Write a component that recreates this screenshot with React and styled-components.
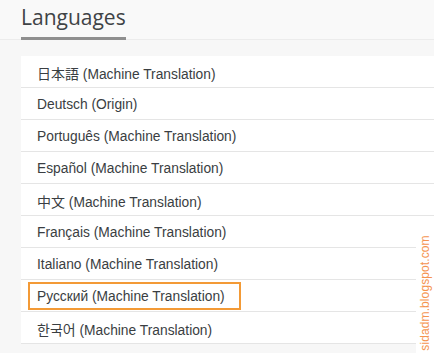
import React from "react";
import styled, { createGlobalStyle } from "styled-components";

const GlobalStyle = createGlobalStyle`
  html, body {
    margin: 0;
    padding: 0;
    background: #f7f7f7;
  }
`;

const Page = styled.div`
  position: relative;
  width: 434px;
  height: 353px;
  overflow: hidden;
  background: #f7f7f7;
  font-family: "Liberation Sans", Arial, "Noto Sans CJK JP", sans-serif;
`;

const Header = styled.div`
  height: 39px;
  padding-left: 21px;
  border-bottom: 1px solid #ececec;
  background: #f9f9f9;
  display: flex;
  align-items: flex-end;
`;

const Title = styled.div`
  font-family: "Open Sans", sans-serif;
  font-size: 21px;
  color: #3f4346;
  line-height: 1;
  padding-bottom: 9px;
  border-bottom: 3px solid #8f8f8f;
  margin-bottom: -1px;
  width: 105px;
`;

const List = styled.div`
  margin: 16px 0 0 21px;
  background: #fff;
`;

const Row = styled.div`
  height: 31px;
  border-bottom: 1px solid #e5e5e5;
  display: flex;
  align-items: center;
  padding-left: 7px;
`;

const Label = styled.span`
  box-sizing: border-box;
  font-size: 13.8px;
  color: #3a3e42;
  padding: 0 7px;
  height: 28px;
  line-height: 26px;
  border: 2px solid ${(p) => (p.$marked ? "#f39a36" : "transparent")};
  width: ${(p) => (p.$marked ? "213px" : "auto")};
`;

const Cjk = styled.span`
  font-family: "Noto Sans CJK JP", "Noto Sans CJK KR", sans-serif;
  font-size: 14px;
`;

const Watermark = styled.div`
  position: absolute;
  right: 0;
  top: 230px;
  width: 18px;
  height: 123px;
  background: #fff;
  display: flex;
  align-items: center;
  justify-content: center;
`;

const WatermarkText = styled.span`
  transform: rotate(-90deg) translateX(-1px);
  white-space: nowrap;
  font-family: "Liberation Sans", Arial, sans-serif;
  font-size: 12px;
  color: #f5944f;
  letter-spacing: 0.1px;
`;

const languages = [
  { cjk: "日本語", rest: " (Machine Translation)" },
  { name: "Deutsch (Origin)" },
  { name: "Português (Machine Translation)" },
  { name: "Español (Machine Translation)" },
  { cjk: "中文", rest: " (Machine Translation)" },
  { name: "Français (Machine Translation)" },
  { name: "Italiano (Machine Translation)" },
  { name: "Русский (Machine Translation)", marked: true },
  { cjk: "한국어", rest: " (Machine Translation)" },
];

const App = () => {
  return (
    <Page>
      <GlobalStyle />
      <Header>
        <Title>Languages</Title>
      </Header>
      <List>
        {languages.map((lang, index) => (
          <Row key={index}>
            <Label $marked={lang.marked}>
              {lang.cjk ? (
                <>
                  <Cjk>{lang.cjk}</Cjk>
                  {lang.rest}
                </>
              ) : (
                lang.name
              )}
            </Label>
          </Row>
        ))}
      </List>
      <Watermark>
        <WatermarkText>sidadm.blogspot.com</WatermarkText>
      </Watermark>
    </Page>
  );
};

export default App;
